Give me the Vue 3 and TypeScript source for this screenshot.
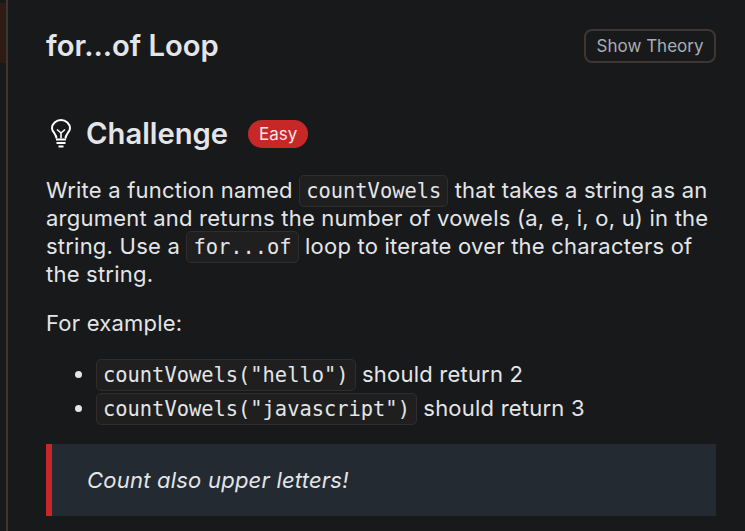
<script setup lang="ts">
const examples = [
  { call: 'countVowels("hello")', result: 'should return 2' },
  { call: 'countVowels("javascript")', result: 'should return 3' }
]
</script>

<template>
  <div class="page">
    <aside class="rail">
      <div class="rail__tab"></div>
    </aside>
    <main class="lesson">
      <header class="lesson__head">
        <h1 class="lesson__title">for...of Loop</h1>
        <button class="theory-btn">Show Theory</button>
      </header>

      <div class="challenge">
        <svg class="challenge__icon" viewBox="0 0 20 29" fill="none" stroke="#fff" stroke-width="2">
          <path d="M5.500 19.500c0-2.800-1-3.800-2.500-5.800C1.800 12.100 1 10.700 1 9.200 1 4.700 5 1 10 1s9 3.700 9 8.200c0 1.500-.8 2.900-2 4.500-1.500 2-2.500 3-2.500 5.800" />
          <path d="M6 10.500l4 3.500 4-3.500M10 14v5.500" stroke-width="1.600" />
          <path d="M5 20.500h10M5.500 24h9M7.500 27.500h5" stroke-width="2.200" />
        </svg>
        <h2 class="challenge__title">Challenge</h2>
        <span class="badge">Easy</span>
      </div>

      <p class="text">
        Write a function named <code class="code">countVowels</code> that takes a string as an
        argument and returns the number of vowels (a, e, i, o, u) in the
        string. Use a <code class="code">for...of</code> loop to iterate over the characters of
        the string.
      </p>
      <p class="text text--example">For example:</p>

      <ul class="examples">
        <li v-for="item in examples" :key="item.call">
          <code class="code">{{ item.call }}</code> {{ item.result }}
        </li>
      </ul>

      <blockquote class="note">Count also upper letters!</blockquote>
    </main>
  </div>
</template>

<style scoped>
.page {
  display: flex;
  width: 745px;
  height: 531px;
  overflow: hidden;
  background: #18191b;
  color: #e3e5e8;
  font-family: Inter, "Noto Sans", sans-serif;
}

.rail {
  flex: none;
  width: 6px;
  padding-top: 3px;
  border-right: 2px solid #3f3632;
}
.rail__tab {
  height: 60px;
  background: #2e1c13;
}

.lesson {
  flex: 1;
  min-width: 0;
  padding: 0 29px 0 38px;
}

.lesson__head {
  display: flex;
  align-items: center;
  justify-content: space-between;
  height: 91px;
}
.lesson__title {
  margin: 0;
  font-size: 29.200px;
  font-weight: 600;
}
.theory-btn {
  height: 34px;
  margin-top: 1px;
  padding: 0 10.500px;
  border: 2px solid #3f3632;
  border-radius: 8px;
  background: transparent;
  color: #a9adb3;
  font: 400 17px Inter, "Noto Sans", sans-serif;
}

.challenge {
  display: flex;
  align-items: center;
  height: 85px;
}
.challenge__icon {
  width: 20px;
  height: 29px;
  margin: 0 15px 0 5px;
}
.challenge__title {
  margin: 0 20px 0 0;
  font-size: 29.200px;
  font-weight: 600;
}
.badge {
  padding: 4px 11px;
  border-radius: 16px;
  background: #c62828;
  color: #f6e6e6;
  font-size: 17px;
}

.text {
  margin: 0;
  font-size: 22px;
  letter-spacing: 0.22px;
  line-height: 28px;
}
.text--example {
  margin-top: 21px;
}

.code {
  padding: 3px 6px;
  border: 1px solid #332d29;
  border-radius: 5px;
  background: #1f1f20;
  font-family: "DejaVu Sans Mono", monospace;
  font-size: 20.400px;
  letter-spacing: 0;
  line-height: 1;
}

.examples {
  margin: 20px 0 0;
  padding: 0 0 0 50px;
  font-size: 22px;
  letter-spacing: 0.22px;
  line-height: 34px;
}

.note {
  margin: 19px 0 0;
  padding: 22px 35px;
  border-left: 6px solid #c62828;
  background: #232a32;
  font-size: 22px;
  font-style: italic;
  letter-spacing: 0.22px;
  line-height: 28px;
}
</style>
